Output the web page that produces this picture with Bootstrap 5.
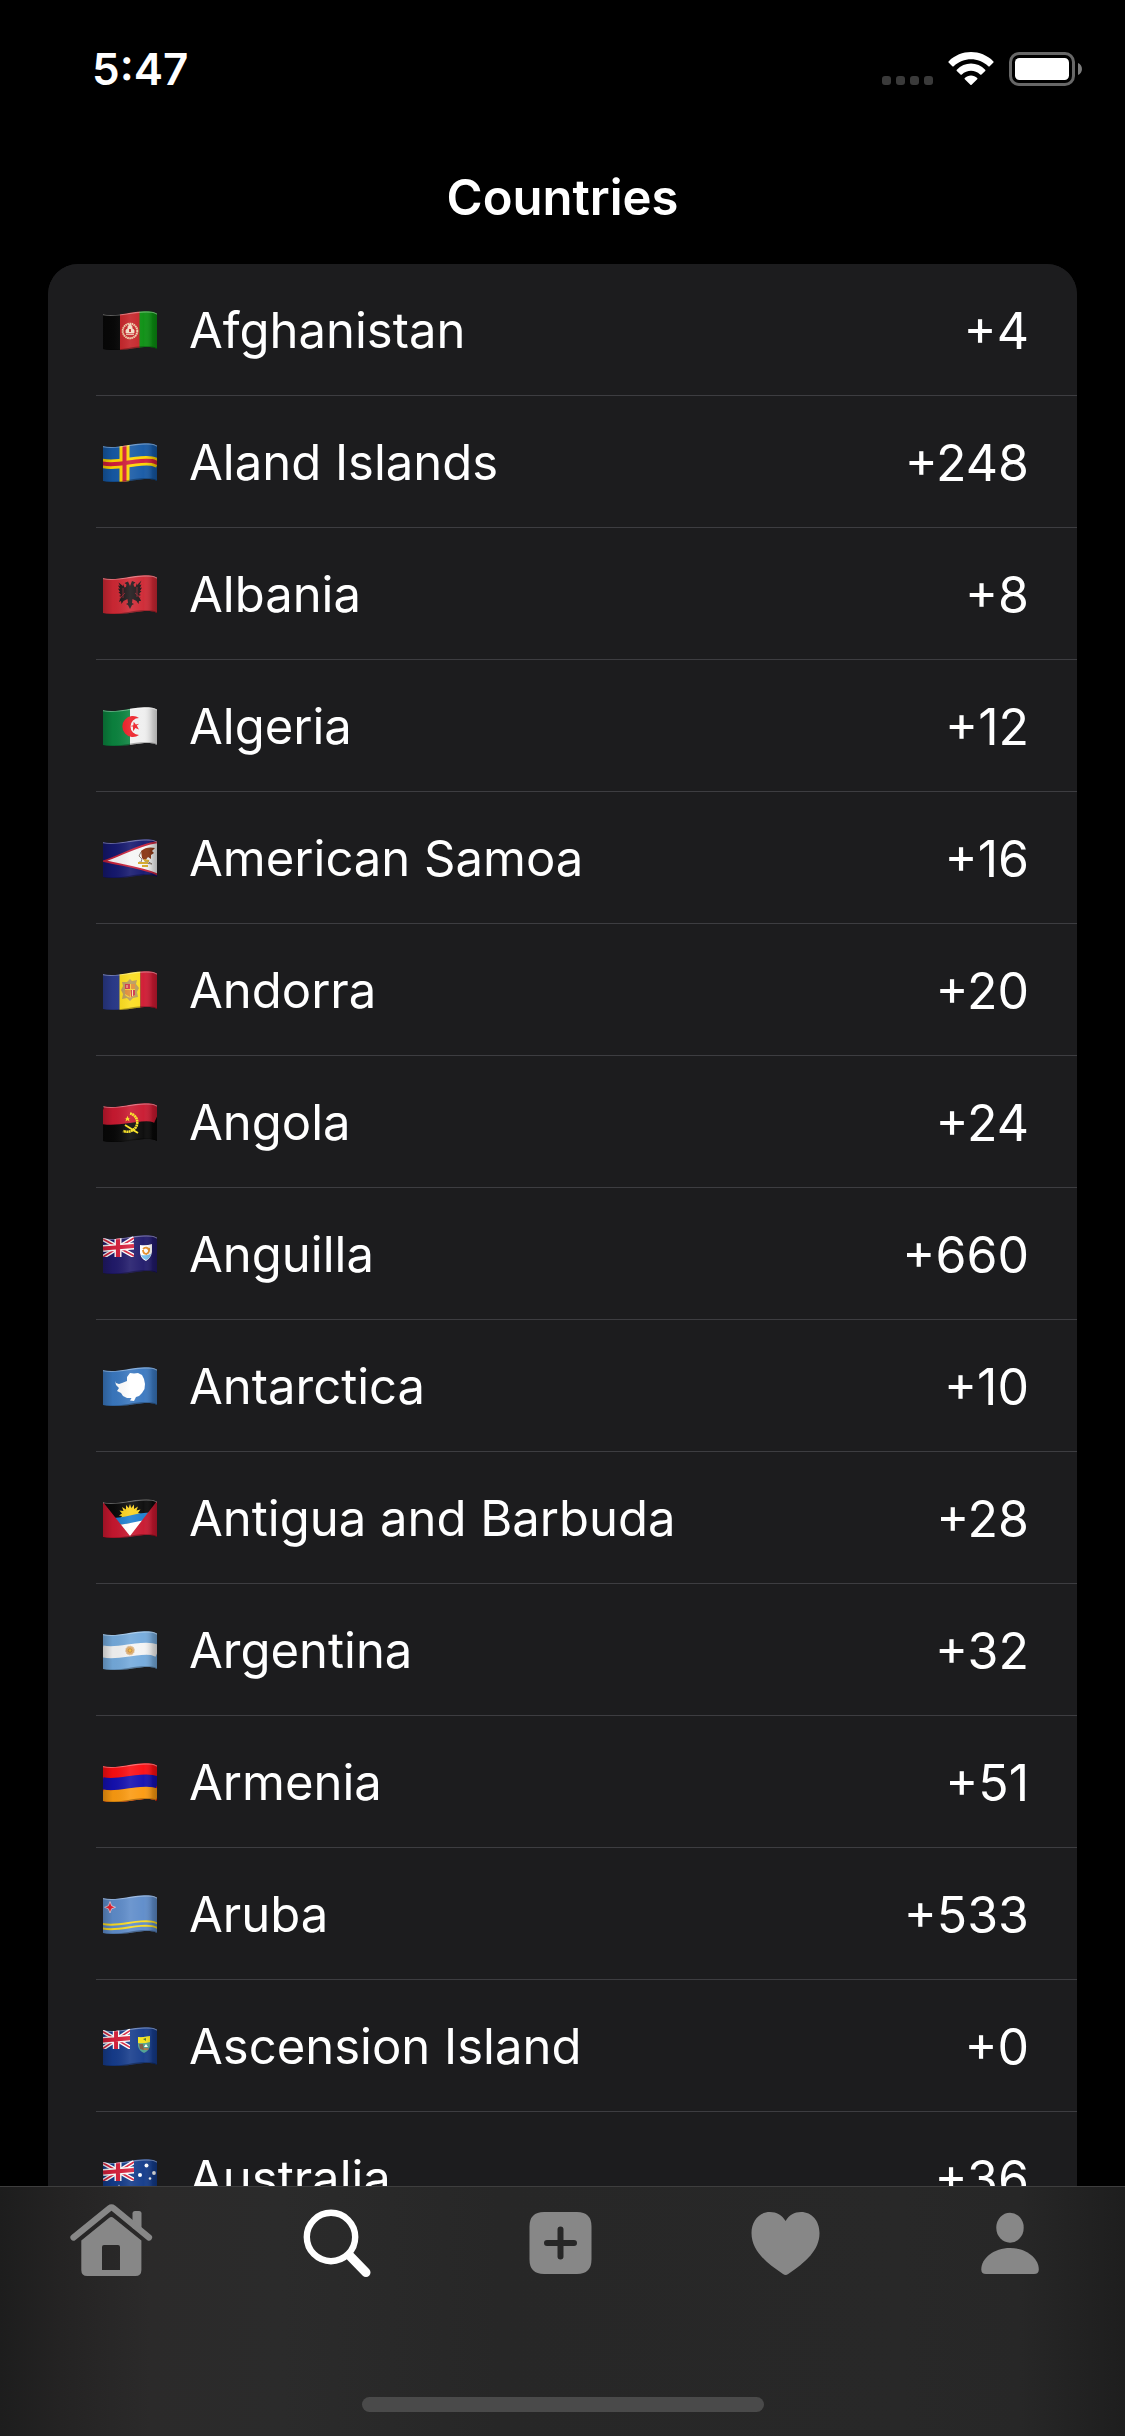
<!DOCTYPE html>
<html lang="en" data-bs-theme="dark">
<head>
<meta charset="utf-8">
<meta name="viewport" content="width=device-width, initial-scale=1">
<title>Countries</title>
<link href="https://cdn.jsdelivr.net/npm/bootstrap@5.3.0/dist/css/bootstrap.min.css" rel="stylesheet">
<style>
  body { background: #000; color: #fff; font-family: Inter, "Noto Sans", sans-serif; }
  .status-bar { height: 132px; padding: 8px 43px 2px 92px; font-size: 44px; font-weight: 600; }
  .status-icons { gap: 15px; }
  .title-bar { height: 132px; }
  .title-bar h1 { font-size: 49px; font-weight: 600; line-height: 60px; }
  .list-area { margin: 0 48px; min-height: 0; }
  .country-list { --bs-list-group-bg: #1c1c1e; --bs-list-group-color: #fff; border-radius: 30px; background: #1c1c1e; }
  .country-list .list-group-item { height: 132px; padding: 0 0 0 48px; border: 0; background: #1c1c1e; }
  .country-row { height: 132px; border-bottom: 1px solid #3d3d41; padding: 2px 48px 0 7px; font-size: 50px; line-height: 60px; }
  .country-name { font-size: 49px; }
  .flag { width: 54px; height: 39px; margin-right: 32px; }
  .tab-area { background: linear-gradient(90deg, #1d1d1d 0, #242323 60px, #2b2a2a 150px, #2b2b2b 280px, #272727 500px, #282828 900px, #272727 1020px, #1e1e1e 100%); border-top: 1px solid #3e3e3e; height: 250px; }
  .tab-area .nav { padding-right: 2px; }
  .tab-area .nav-link { color: #878787; padding: 15px 0 0; line-height: 0; }
  .tab-area .nav-link.active { color: #fff; }
  .tab-icon { width: 90px; height: 78px; }
  .home-indicator { width: 402px; height: 15px; background: #4a4a4a; margin-bottom: 24px; }
</style>
</head>
<body class="vh-100 d-flex flex-column overflow-hidden">

<!-- shared flag parts: wavy outline, wavy line, cloth shading, union canton -->
<svg width="0" height="0" class="position-absolute" aria-hidden="true">
  <defs>
    <clipPath id="cloth"><path d="M0 3C12 6 26 1 38 .4S51 1 54 2.5V38C49 35.6 44 36 38 36.4S12 41 0 38Z"/></clipPath>
    <path id="wave" d="M-1 2.8C12 6 26 1 38 .4S51 1 55 2.8" fill="none"/>
    <linearGradient id="fold"><stop offset="0" stop-color="#000" stop-opacity=".22"/><stop offset=".18" stop-color="#000" stop-opacity=".04"/><stop offset=".5" stop-color="#fff" stop-opacity=".1"/><stop offset=".75" stop-color="#fff" stop-opacity=".03"/><stop offset=".92" stop-color="#000" stop-opacity=".18"/><stop offset="1" stop-color="#000" stop-opacity=".28"/></linearGradient>
    <g id="shade"><rect width="54" height="40" fill="url(#fold)"/><use href="#wave" y=".6" stroke="#fff" stroke-opacity=".35" stroke-width="1.4"/><use href="#wave" y="35.6" stroke="#000" stroke-opacity=".3" stroke-width="1.4"/></g>
    <g id="union"><path d="M0 4 31 21M0 22 31 3" stroke="#fff" stroke-width="4.4"/><path d="M0 4 31 21M0 22 31 3" stroke="#d8203c" stroke-width="1.6"/><path d="M15 3V22M0 13.5 31 11" stroke="#fff" stroke-width="7"/><path d="M15 3V22M0 13.5 31 11" stroke="#d8203c" stroke-width="4.2"/></g>
    <path id="star5" d="M0-5 1.3-1.6 4.8-1.5 2-.6 3 4 0 1.6-3 4-2-.6-4.8-1.5-1.3-1.6Z"/>
  </defs>
</svg>

<header>
  <div class="status-bar d-flex justify-content-between align-items-center">
    <span>5:47</span>
    <div class="status-icons d-flex align-items-center">
      <svg width="51" height="34" viewBox="0 0 51 34" fill="#3a3a3a" role="img" aria-label="No signal"><rect y="24" width="9" height="9" rx="3"/><rect x="14" y="24" width="9" height="9" rx="3"/><rect x="28" y="24" width="9" height="9" rx="3"/><rect x="42" y="24" width="9" height="9" rx="3"/></svg>
      <svg width="46" height="34" viewBox="0 0 46 34" fill="#fff" role="img" aria-label="Wi-Fi"><path d="M.6 9.4C13-3 33-3 45.400 9.400Q46 10 45.400 10.600L41.700 14.200Q41 14.800 40.300 14.200C30.500 5 15.500 5 5.700 14.200Q5 14.800 4.300 14.200L.6 10.600Q0 10 .6 9.400Z"/><path d="M8.800 17.700C16.500 9.600 29.500 9.600 37.200 17.700Q37.800 18.300 37.200 18.900L33.500 22.500Q32.800 23.100 32.100 22.500C27 17.600 19 17.600 13.900 22.500Q13.200 23.100 12.500 22.500L8.800 18.900Q8.200 18.300 8.800 17.700Z"/><path d="M16.800 26.100C20 22.700 26 22.700 29.200 26.100Q29.800 26.700 29.200 27.300L23.600 32.700Q23 33.200 22.400 32.700L16.800 27.300Q16.200 26.700 16.800 26.100Z"/></svg>
      <svg width="73" height="34" viewBox="0 0 73 34" role="img" aria-label="Battery full"><rect x="1.500" y="1.500" width="63" height="31" rx="8.500" fill="none" stroke="#686868" stroke-width="3"/><rect x="6" y="6" width="54" height="22" rx="4.500" fill="#fff"/><path d="M69 11C74.300 13 74.300 21 69 23Z" fill="#7d7d7d"/></svg>
    </div>
  </div>
  <div class="title-bar d-flex justify-content-center align-items-center">
    <h1 class="mb-0">Countries</h1>
  </div>
</header>

<main class="list-area flex-grow-1 overflow-hidden">
  <ul class="list-group country-list overflow-hidden">
    <li class="list-group-item"><div class="country-row d-flex align-items-center">
      <svg class="flag" viewBox="0 0 54 39" aria-hidden="true"><g clip-path="url(#cloth)"><path fill="#080808" d="M0 0h18v40H0z"/><path fill="#c42126" d="M17 0h20v40H17z"/><path fill="#0b8f12" d="M36.500 0H54v40H36.500z"/><circle cx="27" cy="20" r="7.300" fill="none" stroke="#f0cfa8" stroke-width="2" stroke-dasharray="1.600 .5"/><path d="M23 22v-3l2-1.500v-2l2-1.500 2 1.500v2l2 1.500v3zM23 23.500h8M25 16l2-3 2 3" fill="#f3ddc5" stroke="#f3ddc5" stroke-width=".8"/><path d="M26 18h2v3h-2z" fill="#c42126"/><use href="#shade"/></g></svg>
      <span class="country-name">Afghanistan</span><span class="ms-auto">+4</span></div></li>
    <li class="list-group-item"><div class="country-row d-flex align-items-center">
      <svg class="flag" viewBox="0 0 54 39" aria-hidden="true"><g clip-path="url(#cloth)"><path fill="#1659a5" d="M0 0h54v40H0z"/><use href="#wave" y="17.500" stroke="#ffd400" stroke-width="9.500"/><path fill="#ffd400" d="M16.500 0h10v40h-10z"/><use href="#wave" y="17.500" stroke="#d11c3b" stroke-width="4"/><path fill="#d11c3b" d="M19.500 0h4v40h-4z"/><use href="#shade"/></g></svg>
      <span class="country-name">Aland Islands</span><span class="ms-auto">+248</span></div></li>
    <li class="list-group-item"><div class="country-row d-flex align-items-center">
      <svg class="flag" viewBox="0 0 54 39" aria-hidden="true"><g clip-path="url(#cloth)"><path fill="#cf2834" d="M0 0h54v40H0z"/><path fill="#1e1719" d="M27 11 25 6.500 21.500 8 23.500 9.500 23 12 21.500 12.500 20 9 20 11 15.500 7.500 17 11 15 10.500 17 14 15 13.500 17 17 15.500 17 18 20 16 21 18.500 22 17 24 16 27 18 26 18.500 29 20.500 26 24.500 24 25 28 23 29 25 30 27 34 29 30 31 29 29 28 29.500 24 33.500 26 35.500 29 36 26 38 26 37 23.500 35.500 21 38 20 36 19 38.500 16 37 16 39 12.500 37 13 38.500 9.500 36.500 10 38.500 5.500 34 10 34 8 32.500 12 31 11.500 30.500 9 32.500 7.500 29 6Z"/><path d="M20 13v10M34 12v10M16 24 22 18M38 23 32 18" stroke="#a52430" stroke-width=".7"/><use href="#shade"/></g></svg>
      <span class="country-name">Albania</span><span class="ms-auto">+8</span></div></li>
    <li class="list-group-item"><div class="country-row d-flex align-items-center">
      <svg class="flag" viewBox="0 0 54 39" aria-hidden="true"><g clip-path="url(#cloth)"><path fill="#0b843f" d="M0 0h27v40H0z"/><path fill="#efefef" d="M27 0h27v40H27z"/><path fill="#ed1c24" d="M36 11A10.500 10.500 0 1 0 36 28 8.500 8.500 0 1 1 36 11Z"/><use href="#star5" transform="translate(32 19.500) rotate(-15)" fill="#ed1c24"/><use href="#shade"/></g></svg>
      <span class="country-name">Algeria</span><span class="ms-auto">+12</span></div></li>
    <li class="list-group-item"><div class="country-row d-flex align-items-center">
      <svg class="flag" viewBox="0 0 54 39" aria-hidden="true"><g clip-path="url(#cloth)"><path fill="#15186f" d="M0 0h54v40H0z"/><path d="M1 22C18 17 36 5 56 3V36C40 29 22 27 1 22Z" fill="#f5f5f5" stroke="#c8233c" stroke-width="1.800"/><path d="M38 12C42 8 48 8 52 9L49 12 51 14 48 16 48 20 45 18 42 22 39 19Z" fill="#8b3513"/><path d="M38 13 36 17 39 20 38 23M40 24l4-2 5 3M36 23l13 2" fill="none" stroke="#8b7b70" stroke-width="1"/><path d="M35 24h10M39 27h6M41 21l5 1" stroke="#d5a928" stroke-width="1.800"/><use href="#shade"/></g></svg>
      <span class="country-name">American Samoa</span><span class="ms-auto">+16</span></div></li>
    <li class="list-group-item"><div class="country-row d-flex align-items-center">
      <svg class="flag" viewBox="0 0 54 39" aria-hidden="true"><g clip-path="url(#cloth)"><path fill="#2b3b8c" d="M0 0h17v40H0z"/><path fill="#fbdc1b" d="M16.500 0h21v40h-21z"/><path fill="#d01a33" d="M37.500 0H54v40H37.500z"/><path d="M27 8l2 2 5-1-1 4 3 4-2 4 1 5-5 1-3 3-3-3-5 1 1-5-2-4 2-4-1-4 5 0Z" fill="#b89a58"/><path d="M22 13h10v11q-5 5-10 0z" fill="#f4cf35"/><path d="M22 13h5v5h-5zM27.500 19H32v5l-4 2z" fill="#cf3145"/><path d="M28 13h4v5h-4zM22 19h5v7l-5-3z" fill="#e18b36"/><path d="M24 14v3M29.500 19v6" stroke="#f7e2a0"/><use href="#shade"/></g></svg>
      <span class="country-name">Andorra</span><span class="ms-auto">+20</span></div></li>
    <li class="list-group-item"><div class="country-row d-flex align-items-center">
      <svg class="flag" viewBox="0 0 54 39" aria-hidden="true"><g clip-path="url(#cloth)"><path fill="#080808" d="M0 0h54v40H0z"/><use href="#wave" y="8.500" stroke="#c91930" stroke-width="19"/><path d="M27 10.500A9 9 0 0 1 30 27Q26 30 20 28" fill="none" stroke="#f9e21c" stroke-width="2.600" stroke-dasharray="2 .4"/><path d="M22 22 35 30" stroke="#f9e21c" stroke-width="2"/><use href="#star5" transform="translate(24.500 16) scale(.65)" fill="#f9e21c"/><use href="#shade"/></g></svg>
      <span class="country-name">Angola</span><span class="ms-auto">+24</span></div></li>
    <li class="list-group-item"><div class="country-row d-flex align-items-center">
      <svg class="flag" viewBox="0 0 54 39" aria-hidden="true"><g clip-path="url(#cloth)"><path fill="#211a6b" d="M0 0h54v40H0z"/><svg width="31" height="22"><use href="#union"/></svg><path d="M37 10Q43 11 49 9V17Q48 23 43 26 38 24 37 18Z" fill="#fff"/><path d="M38 20q5 1 10-1-1 4-5 6-4-2-5-5z" fill="#75bff0"/><path d="M40 14q4-3 6 1M46 13q1 5-3 6M44 19q-4 0-4-4" fill="none" stroke="#e8902a" stroke-width="1.800"/><use href="#shade"/></g></svg>
      <span class="country-name">Anguilla</span><span class="ms-auto">+660</span></div></li>
    <li class="list-group-item"><div class="country-row d-flex align-items-center">
      <svg class="flag" viewBox="0 0 54 39" aria-hidden="true"><g clip-path="url(#cloth)"><path fill="#3a78c0" d="M0 0h54v40H0z"/><path fill="#fff" d="M12 14 13 16 16 17 19 16 24 14 24 10 27 6 31 6.500 35 6 39 8 41 12 42 17 41.500 22 39 26 36 29 33 30 31 34 27 33.500 28.500 31 24 31 20 29 18 26 14 24 16 21 13 18Z"/><use href="#shade"/></g></svg>
      <span class="country-name">Antarctica</span><span class="ms-auto">+10</span></div></li>
    <li class="list-group-item"><div class="country-row d-flex align-items-center">
      <svg class="flag" viewBox="0 0 54 39" aria-hidden="true"><g clip-path="url(#cloth)"><path fill="#0a0a0a" d="M0 0h54v40H0z"/><path fill="#fcd21b" d="M27 5 28.300 9 31 5.500 31 10 35 7.500 33.500 11.500 37.500 10.500 35 14 38 15 35 17 17 20 19 17 16 16.500 19 14.500 16.500 11.500 20.500 12 19 8 23 10.500 23 6 25.700 9Z"/><path fill="#1e7fd0" d="M8 19C22 19 32 14 46 13.500L40 23 14 26Z"/><path fill="#fff" d="M12 26C23 26 32 22 42 21.500L27 38Z"/><path fill="#c8172f" d="M0 3 27 37V41H0ZM54 2 27 37V41H54Z"/><use href="#shade"/></g></svg>
      <span class="country-name">Antigua and Barbuda</span><span class="ms-auto">+28</span></div></li>
    <li class="list-group-item"><div class="country-row d-flex align-items-center">
      <svg class="flag" viewBox="0 0 54 39" aria-hidden="true"><g clip-path="url(#cloth)"><path fill="#74aadc" d="M0 0h54v40H0z"/><use href="#wave" y="17.500" stroke="#f4f4f4" stroke-width="12"/><circle cx="27" cy="19.500" r="4.200" fill="#dda660" stroke="#d8b58c" stroke-width="1.300" stroke-dasharray="1 .6"/><circle cx="27" cy="19.500" r="1.800" fill="#f0b633" stroke="#a7712f" stroke-width=".6"/><use href="#shade"/></g></svg>
      <span class="country-name">Argentina</span><span class="ms-auto">+32</span></div></li>
    <li class="list-group-item"><div class="country-row d-flex align-items-center">
      <svg class="flag" viewBox="0 0 54 39" aria-hidden="true"><g clip-path="url(#cloth)"><path fill="#fb0d12" d="M0 0h54v40H0z"/><use href="#wave" y="17.500" stroke="#1410b0" stroke-width="12.500"/><use href="#wave" y="30" stroke="#fb9a10" stroke-width="13"/><use href="#shade"/></g></svg>
      <span class="country-name">Armenia</span><span class="ms-auto">+51</span></div></li>
    <li class="list-group-item"><div class="country-row d-flex align-items-center">
      <svg class="flag" viewBox="0 0 54 39" aria-hidden="true"><g clip-path="url(#cloth)"><path fill="#5e8cca" d="M0 0h54v40H0z"/><use href="#wave" y="26" stroke="#fbdb20" stroke-width="1.900"/><use href="#wave" y="30.500" stroke="#fbdb20" stroke-width="1.900"/><path d="M7 6.500 8.600 10.700 12.500 12.300 8.600 13.800 7 18 5.400 13.800 1.500 12.300 5.400 10.700Z" fill="#ee2130" stroke="#e7d5e2" stroke-width=".8"/><use href="#shade"/></g></svg>
      <span class="country-name">Aruba</span><span class="ms-auto">+533</span></div></li>
    <li class="list-group-item"><div class="country-row d-flex align-items-center">
      <svg class="flag" viewBox="0 0 54 39" aria-hidden="true"><g clip-path="url(#cloth)"><path fill="#163c8c" d="M0 0h54v40H0z"/><svg width="27" height="22" viewBox="1 0 29 22" preserveAspectRatio="none"><use href="#union"/></svg><path d="M35 10Q41 10.500 47 9V19Q46 24 41 26 36 24 35 19Z" fill="#4fa08f"/><path d="M35 10Q41 10.500 47 9V15Q41 17 35 16Z" fill="#f7e51d"/><path d="M40 12l3-1v3z" fill="#4b7a26"/><path d="M36 17l4 0 1 6-4-1z" fill="#7d5b45"/><path d="M41 20l2-3 2 3z" fill="#fff"/><path d="M40.500 22h5" stroke="#bf6b33" stroke-width="1.500"/><use href="#shade"/></g></svg>
      <span class="country-name">Ascension Island</span><span class="ms-auto">+0</span></div></li>
    <li class="list-group-item"><div class="country-row d-flex align-items-center">
      <svg class="flag" viewBox="0 0 54 39" aria-hidden="true"><g clip-path="url(#cloth)"><path fill="#133b8a" d="M0 0h54v40H0z"/><svg width="31" height="22"><use href="#union"/></svg><g fill="#fff"><circle cx="43.500" cy="6.500" r="2"/><circle cx="37" cy="16" r="2"/><circle cx="51" cy="14" r="1.900"/><circle cx="47" cy="19.500" r="1.300"/><circle cx="43.500" cy="31" r="2"/><use href="#star5" transform="translate(16 30.500)"/></g><use href="#shade"/></g></svg>
      <span class="country-name">Australia</span><span class="ms-auto">+36</span></div></li>
  </ul>
</main>

<footer class="tab-area d-flex flex-column justify-content-between flex-shrink-0">
  <nav class="nav nav-justified" aria-label="Main">
    <a class="nav-link nav-item" href="#home" aria-label="Home"><svg class="tab-icon" viewBox="0 0 90 78" fill="currentColor"><path d="M65.500 26V11.500Q65.500 9 68 9H72Q74.500 9 74.500 11.500V30Z"/><path d="M6.500 35.500 42.500 6.300Q44.500 4.800 46.500 6.300L82 35.500" fill="none" stroke="currentColor" stroke-width="6.200" stroke-linecap="round"/><path fill-rule="evenodd" d="M14.300 38.500 42 16Q44.300 14 46.600 16L74.400 38.500V68Q74.400 74 68.400 74H20.300Q14.300 74 14.300 68ZM37 43Q35 43 35 45V68H53V45Q53 43 51 43Z"/></svg></a>
    <a class="nav-link nav-item active" href="#search" aria-label="Search" aria-current="page"><svg class="tab-icon" viewBox="0 0 90 78" fill="none" stroke="currentColor"><circle cx="39" cy="35" r="24.200" stroke-width="6.400"/><path d="M58 54 74 70.500" stroke-width="9" stroke-linecap="round"/></svg></a>
    <a class="nav-link nav-item" href="#add" aria-label="Add"><svg class="tab-icon" viewBox="0 0 90 78" fill="currentColor"><path fill-rule="evenodd" d="M28 10H61Q75.500 10 75.500 24.500V57.500Q75.500 72 61 72H28Q13.500 72 13.500 57.500V24.500Q13.500 10 28 10ZM44.500 24.500Q41.500 24.500 41.500 27.500V38H31Q28 38 28 41T31 44H41.500V54.500Q41.500 57.500 44.500 57.500T47.500 54.500V44H58Q61 44 61 41T58 38H47.500V27.500Q47.500 24.500 44.500 24.500Z"/></svg></a>
    <a class="nav-link nav-item" href="#favorites" aria-label="Favorites"><svg class="tab-icon" viewBox="0 0 90 78" fill="currentColor"><path d="M44.600 19C41 13 35.500 10 29 10C18 10 10.500 19 10.500 31C10.500 48 24 60 42 72Q44.600 74 47.200 72C65 60 78.500 48 78.500 31C78.500 19 71 10 60 10C53.500 10 48 13 44.600 19Z"/></svg></a>
    <a class="nav-link nav-item" href="#profile" aria-label="Profile"><svg class="tab-icon" viewBox="0 0 90 78" fill="currentColor"><ellipse cx="44" cy="25.700" rx="13.700" ry="15"/><path d="M44 46C60 46 72.800 56 72.800 67.500Q72.800 72 68 72H20Q15.300 72 15.300 67.500C15.300 56 28 46 44 46Z"/></svg></a>
  </nav>
  <div class="home-indicator rounded-pill align-self-center"></div>
</footer>

<script src="https://cdn.jsdelivr.net/npm/bootstrap@5.3.0/dist/js/bootstrap.bundle.min.js"></script>
</body>
</html>
